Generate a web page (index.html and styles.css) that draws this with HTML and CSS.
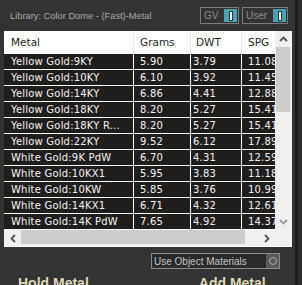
FILE: index.html
```html
<!DOCTYPE html>
<html lang="en">
<head>
    <meta charset="UTF-8">
    <title>Metal Library</title>
    <link rel="stylesheet" href="styles.css">
</head>
<body>
    <div class="panel">
        <div class="topbar">
            <span class="library">Library: Color Dome - (Fast)-Metal</span>
            <div class="toggles">
                <div class="toggle"><span>GV</span><i class="switch"></i></div>
                <div class="toggle"><span>User</span><i class="switch"></i></div>
            </div>
        </div>

        <div class="grid-box">
            <div class="table-view">
                <div class="head">
                    <div class="col-metal">Metal</div>
                    <div class="col-grams">Grams</div>
                    <div class="col-dwt">DWT</div>
                    <div class="col-spg">SPG</div>
                </div>
                <div class="rows">
                    <div class="col-metal">Yellow Gold:9KY</div><div class="col-grams">5.90</div><div class="col-dwt">3.79</div><div class="col-spg">11.08</div>
                    <div class="col-metal">Yellow Gold:10KY</div><div class="col-grams">6.10</div><div class="col-dwt">3.92</div><div class="col-spg">11.45</div>
                    <div class="col-metal">Yellow Gold:14KY</div><div class="col-grams">6.86</div><div class="col-dwt">4.41</div><div class="col-spg">12.88</div>
                    <div class="col-metal">Yellow Gold:18KY</div><div class="col-grams">8.20</div><div class="col-dwt">5.27</div><div class="col-spg">15.41</div>
                    <div class="col-metal">Yellow Gold:18KY R...</div><div class="col-grams">8.20</div><div class="col-dwt">5.27</div><div class="col-spg">15.41</div>
                    <div class="col-metal">Yellow Gold:22KY</div><div class="col-grams">9.52</div><div class="col-dwt">6.12</div><div class="col-spg">17.89</div>
                    <div class="col-metal">White Gold:9K PdW</div><div class="col-grams">6.70</div><div class="col-dwt">4.31</div><div class="col-spg">12.59</div>
                    <div class="col-metal">White Gold:10KX1</div><div class="col-grams">5.95</div><div class="col-dwt">3.83</div><div class="col-spg">11.18</div>
                    <div class="col-metal">White Gold:10KW</div><div class="col-grams">5.85</div><div class="col-dwt">3.76</div><div class="col-spg">10.99</div>
                    <div class="col-metal">White Gold:14KX1</div><div class="col-grams">6.71</div><div class="col-dwt">4.32</div><div class="col-spg">12.61</div>
                    <div class="col-metal">White Gold:14K PdW</div><div class="col-grams">7.65</div><div class="col-dwt">4.92</div><div class="col-spg">14.37</div>
                </div>
            </div>

            <div class="vscroll">
                <div class="arrow-btn">
                    <svg width="9" height="6" viewBox="0 0 9 6"><path d="M1 5 L4.5 1.5 L8 5" fill="none" stroke="#555" stroke-width="1.8"/></svg>
                </div>
                <div class="track"><div class="thumb"></div></div>
                <div class="arrow-btn">
                    <svg width="9" height="6" viewBox="0 0 9 6"><path d="M1 1 L4.5 4.5 L8 1" fill="none" stroke="#999" stroke-width="1.8"/></svg>
                </div>
            </div>

            <div class="hscroll">
                <div class="arrow-btn">
                    <svg width="6" height="9" viewBox="0 0 6 9"><path d="M5 1 L1.5 4.5 L5 8" fill="none" stroke="#555" stroke-width="1.8"/></svg>
                </div>
                <div class="track"><div class="thumb"></div></div>
                <div class="arrow-btn">
                    <svg width="6" height="9" viewBox="0 0 6 9"><path d="M1 1 L4.5 4.5 L1 8" fill="none" stroke="#555" stroke-width="1.8"/></svg>
                </div>
            </div>
            <div class="corner"></div>
        </div>

        <div class="options">
            <div class="check">
                <span>Use Object Materials</span>
                <span class="check-btn"><i></i></span>
            </div>
        </div>

        <div class="actions">
            <span>Hold Metal</span>
            <span>Add Metal</span>
        </div>
    </div>
</body>
</html>
```

FILE: styles.css
```css
body {
    margin: 0;
    width: 302px;
    height: 285px;
    overflow: hidden;
    background: #2c2c2c;
    font-family: 'Liberation Sans', Arial, sans-serif;
}
.panel {
    width: 291px;
    height: 285px;
    padding-left: 4px;
    background: #333333;
    border-right: 3px solid #1c1c1c;
    display: flex;
    flex-direction: column;
    overflow: hidden;
}
.panel > div {
    flex-shrink: 0;
}

/* top bar */
.topbar {
    height: 31px;
    width: 288px;
    display: flex;
    align-items: center;
}
.library {
    padding-left: 6px;
    font-size: 9.3px;
    color: #a8a8a8;
}
.toggles {
    margin-left: auto;
    margin-right: 4px;
    display: flex;
    gap: 3px;
}
.toggle {
    height: 15px;
    border: 1px solid #7a7a7a;
    display: flex;
    align-items: center;
    padding: 0 1px 0 3px;
    font-size: 10px;
    color: #8c8c8c;
}
.toggle:first-child {
    width: 33px;
}
.toggle:last-child {
    width: 40px;
}
.toggle span {
    flex: 1;
}
.switch {
    width: 13px;
    height: 13px;
    background: #47a3ad;
    display: flex;
    align-items: center;
    justify-content: center;
}
.switch::after {
    content: '';
    width: 2px;
    height: 8px;
    background: #fff;
    border: 1px solid #1d3c44;
}

/* table area */
.grid-box {
    width: 288px;
    display: grid;
    grid-template-columns: 271px 17px;
    grid-template-rows: 199px 16px;
    padding-bottom: 1px;
    background: #fff;
}
.table-view {
    overflow: hidden;
    font-family: 'DejaVu Sans', Verdana, sans-serif;
}
.head,
.rows {
    display: grid;
    grid-template-columns: 129px 56px 50px 60px;
    column-gap: 1px;
}
.head {
    height: 23px;
    align-items: center;
    font-size: 10.5px;
    color: #1e1e1e;
    background: #e6e6e6;
}
.head div {
    background: #fff;
    height: 23px;
    line-height: 23px;
}
.rows {
    grid-auto-rows: 15px;
    row-gap: 1px;
}
.rows div {
    background: #201e1d;
    color: #f2f2f2;
    font-size: 10px;
    letter-spacing: 0.2px;
    line-height: 15px;
    white-space: nowrap;
    overflow: hidden;
}
.col-metal { padding-left: 7px; }
.col-grams { padding-left: 6px; }
.col-dwt { padding-left: 2px; }
.head .col-dwt { padding-left: 5px; }
.col-spg { padding-left: 6px; }

/* scrollbars */
.vscroll {
    display: flex;
    flex-direction: column;
    background: #f0f0f0;
}
.hscroll {
    display: flex;
    background: #f0f0f0;
}
.arrow-btn {
    width: 17px;
    height: 16px;
    display: flex;
    align-items: center;
    justify-content: center;
    flex-shrink: 0;
}
.vscroll .track {
    flex: 1;
}
.vscroll .thumb {
    height: 65px;
    margin: 0 2px 0 1px;
    background: #cdcdcd;
}
.hscroll .track {
    flex: 1;
}
.hscroll .thumb {
    width: 224px;
    height: 14px;
    background: #cdcdcd;
}
.corner {
    background: #f0f0f0;
}

/* options */
.options {
    width: 276px;
    margin-top: 6px;
    display: flex;
    justify-content: flex-end;
}
.check {
    width: 125px;
    height: 14px;
    border: 1px solid #8a8a8a;
    background: #2a2a2a;
    display: flex;
    align-items: center;
    padding-left: 2px;
    font-size: 10px;
    color: #c4c4c4;
}
.check span:first-child {
    flex: 1;
}
.check-btn {
    width: 13px;
    height: 14px;
    background: #5a5a5a;
    display: flex;
    align-items: center;
    justify-content: center;
}
.check-btn i {
    width: 6px;
    height: 6px;
    border: 1px solid #a8a8a8;
    border-radius: 50%;
}

/* bottom buttons, cut off by the window edge */
.actions {
    margin-top: 6px;
    display: flex;
    padding-left: 14px;
    gap: 110px;
    font-size: 14px;
    font-weight: bold;
    color: #ddd8b8;
    white-space: nowrap;
}
```
